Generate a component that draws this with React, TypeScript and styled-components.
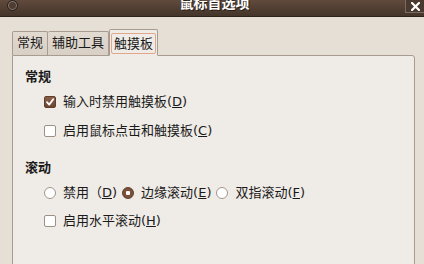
import styled, { createGlobalStyle } from "styled-components";

const GlobalStyle = createGlobalStyle`
  html, body {
    margin: 0;
    padding: 0;
    overflow: hidden;
  }

  body {
    font-family: "DejaVu Sans", "Noto Sans CJK SC", sans-serif;
    font-size: 13px;
    color: #1a1a1a;
  }
`;

type Option = {
  label: string;
  key: string;
  checked: boolean;
};

const generalOptions: Option[] = [
  { label: "输入时禁用触摸板", key: "D", checked: true },
  { label: "启用鼠标点击和触摸板", key: "C", checked: false },
];

const scrollModes: Option[] = [
  { label: "禁用（", key: "D", checked: false },
  { label: "边缘滚动(", key: "E", checked: true },
  { label: "双指滚动(", key: "F", checked: false },
];

const tabs = ["常规", "辅助工具", "触摸板"];

const CheckMark = () => (
  <svg width="10" height="10" viewBox="0 0 10 10">
    <path
      d="M2 5.2 L4.2 7.6 L8.2 2.2"
      fill="none"
      stroke="#fff"
      strokeWidth="1.8"
      strokeLinecap="round"
      strokeLinejoin="round"
    />
  </svg>
);

const App = () => {
  return (
    <Window>
      <GlobalStyle />

      <TitleBar>
        <MenuButton />
        <Title>鼠标首选项</Title>
        <CloseButton>
          <svg width="9" height="9" viewBox="0 0 9 9">
            <path
              d="M1 1 L8 8 M8 1 L1 8"
              stroke="#fff"
              strokeWidth="2.2"
              strokeLinecap="square"
            />
          </svg>
        </CloseButton>
      </TitleBar>

      <Content>
        <TabRow>
          {tabs.map((tab, index) => (
            <Tab key={tab} active={index === tabs.length - 1}>
              <TabLabel active={index === tabs.length - 1}>{tab}</TabLabel>
            </Tab>
          ))}
        </TabRow>

        <Panel>
          <Section>
            <Heading>常规</Heading>
            <OptionList>
              {generalOptions.map((option) => (
                <Row key={option.key}>
                  <CheckBox checked={option.checked}>
                    {option.checked && <CheckMark />}
                  </CheckBox>
                  <Label>
                    {option.label}(<Key>{option.key}</Key>)
                  </Label>
                </Row>
              ))}
            </OptionList>
          </Section>

          <Section>
            <Heading>滚动</Heading>
            <OptionList>
              <Row>
                {scrollModes.map((mode) => (
                  <RadioItem key={mode.key}>
                    <Radio checked={mode.checked} />
                    <Label>
                      {mode.label}
                      <Key>{mode.key}</Key>)
                    </Label>
                  </RadioItem>
                ))}
              </Row>
              <Row>
                <CheckBox checked={false} />
                <Label>
                  启用水平滚动(<Key>H</Key>)
                </Label>
              </Row>
            </OptionList>
          </Section>
        </Panel>
      </Content>
    </Window>
  );
};

export default App;

const Window = styled.div`
  width: 424px;
  height: 264px;
  display: flex;
  flex-direction: column;
  background: #e6dfd6;
  overflow: hidden;
`;

const TitleBar = styled.div`
  height: 16px;
  flex-shrink: 0;
  display: flex;
  align-items: flex-start;
  background: linear-gradient(#604a3c, #44342a);
  border-bottom: 1px solid #2e231d;
`;

const MenuButton = styled.div`
  width: 9px;
  height: 9px;
  margin: 0 0 0 7px;
  border-radius: 50%;
  border: 1px solid #2a201b;
  box-shadow: inset 0 0 0 1px #8a7d74;
  background: #4e3d33;
`;

const Title = styled.div`
  flex: 1;
  text-align: center;
  margin-top: -5px;
  padding-left: 10px;
  font-size: 14px;
  line-height: 16px;
  font-weight: bold;
  color: #ffffff;
  text-shadow: 1px 1px 0 #2a1f19;
`;

const CloseButton = styled.div`
  width: 18px;
  height: 12px;
  margin-left: 4px;
  display: flex;
  align-items: center;
  justify-content: center;
  border: 1px solid #7b6b60;
  border-top: none;
  border-right: none;
  background: #4a392f;
`;

const Content = styled.div`
  flex: 1;
  display: flex;
  flex-direction: column;
  padding: 12px 9px 0 12px;
`;

const TabRow = styled.div`
  display: flex;
  align-items: flex-end;
  position: relative;
  z-index: 1;
`;

const Tab = styled.div<{ active: boolean }>`
  height: ${(p) => (p.active ? "27px" : "24px")};
  box-sizing: border-box;
  padding: ${(p) => (p.active ? "2px 1px 0" : "0 4px")};
  display: flex;
  align-items: ${(p) => (p.active ? "flex-start" : "center")};
  border: 1px solid #a89c90;
  border-bottom: ${(p) => (p.active ? "1px solid #efebe6" : "none")};
  border-left: ${(p) => (p.active ? "1px solid #a89c90" : "none")};
  border-radius: 2px 2px 0 0;
  background: ${(p) =>
    p.active ? "#efebe6" : "linear-gradient(#e2dbd2, #d8cfc5)"};
  margin-bottom: ${(p) => (p.active ? "-1px" : "0")};

  &:first-child {
    border-left: 1px solid #a89c90;
  }
`;

const TabLabel = styled.span<{ active: boolean }>`
  line-height: 18px;
  padding: ${(p) => (p.active ? "1px 2px 0" : "0")};
  border: ${(p) => (p.active ? "1px solid #e2a68b" : "none")};
  border-radius: 2px;
  margin-top: ${(p) => (p.active ? "1px" : "-2px")};
`;

const Panel = styled.div`
  flex: 1;
  min-height: 230px;
  display: flex;
  flex-direction: column;
  gap: 16px;
  padding: 12px 12px 0;
  background: #efebe6;
  border: 1px solid #a89c90;
  border-radius: 0 3px 0 0;
`;

const Section = styled.div`
  display: flex;
  flex-direction: column;
  gap: 4px;
`;

const Heading = styled.div`
  font-weight: bold;
  line-height: 18px;
`;

const OptionList = styled.div`
  display: flex;
  flex-direction: column;
  gap: 4.5px;
  padding-left: 19px;
`;

const Row = styled.div`
  height: 24px;
  display: flex;
  align-items: center;
  gap: 7px;
`;

const RadioItem = styled.div`
  display: flex;
  align-items: center;
  gap: 7px;
  margin-right: -2px;
`;

const CheckBox = styled.div<{ checked: boolean }>`
  width: 12px;
  height: 12px;
  box-sizing: border-box;
  display: flex;
  align-items: center;
  justify-content: center;
  border: 1px solid ${(p) => (p.checked ? "#5e3d2b" : "#9d9186")};
  border-radius: 2px;
  background: ${(p) =>
    p.checked ? "linear-gradient(#8a6048, #6c4632)" : "#ffffff"};
`;

const Radio = styled.div<{ checked: boolean }>`
  width: 12px;
  height: 12px;
  box-sizing: border-box;
  border-radius: 50%;
  border: 1px solid ${(p) => (p.checked ? "#5e3d2b" : "#a1968b")};
  background: ${(p) =>
    p.checked
      ? "radial-gradient(circle, #ffffff 0 2px, #7a503a 2.5px)"
      : "#ffffff"};
`;

const Label = styled.span`
  line-height: 18px;
  white-space: nowrap;
`;

const Key = styled.span`
  text-decoration: underline;
`;
